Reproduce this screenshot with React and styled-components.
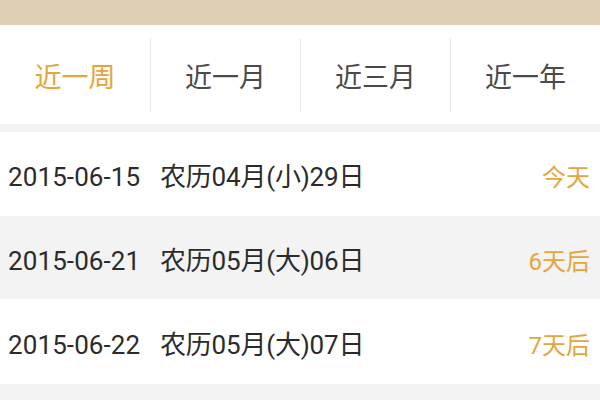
import React from "react";
import styled, { createGlobalStyle } from "styled-components";

const GlobalStyle = createGlobalStyle`
  html, body {
    margin: 0;
    padding: 0;
    background: #f3f3f3;
  }
  body {
    font-family: Roboto, "Noto Sans CJK SC", sans-serif;
  }
`;

const Page = styled.div`
  width: 600px;
  height: 400px;
  overflow: hidden;
  background: #f3f3f3;
`;

const TopBar = styled.div`
  height: 25px;
  background: #dfd0b4;
`;

const Tabs = styled.div`
  display: grid;
  grid-template-columns: repeat(4, 1fr);
  height: 99px;
  background: #fff;
  margin-bottom: 8px;
  align-items: center;
`;

const Tab = styled.div`
  height: 74px;
  display: flex;
  align-items: center;
  justify-content: center;
  font-size: 27px;
  padding-top: 2px;
  box-sizing: border-box;
  color: ${(p) => (p.active ? "#e6a53c" : "#4a4a4a")};
  border-left: ${(p) => (p.first ? "none" : "1px solid #e8e8e8")};
`;

const Row = styled.div`
  height: ${(p) => p.h}px;
  display: flex;
  align-items: baseline;
  box-sizing: border-box;
  padding: ${(p) => p.top}px 10px 0 8px;
  background: ${(p) => (p.odd ? "#f3f3f3" : "#fff")};
  color: #2b2b2b;
  font-size: 26px;
  line-height: 30px;
`;

const DateText = styled.span`
  width: 152px;
  letter-spacing: 0.1px;
`;

const Lunar = styled.span`
  flex: 1;
  letter-spacing: -0.2px;
`;

const Diff = styled.span`
  color: #e6a53c;
  font-size: 24px;
`;

const tabs = ["近一周", "近一月", "近三月", "近一年"];

const rows = [
  { date: "2015-06-15", lunar: "农历04月(小)29日", diff: "今天", h: 84, top: 30 },
  { date: "2015-06-21", lunar: "农历05月(大)06日", diff: "6天后", h: 83, top: 30 },
  { date: "2015-06-22", lunar: "农历05月(大)07日", diff: "7天后", h: 85, top: 31 },
  { date: "", lunar: "", diff: "", h: 40, top: 0 },
];

export default function App() {
  return (
    <Page>
      <GlobalStyle />
      <TopBar />
      <Tabs>
        {tabs.map((t, i) => (
          <Tab key={t} first={i === 0} active={i === 0}>
            {t}
          </Tab>
        ))}
      </Tabs>
      {rows.map((r, i) => (
        <Row key={i} h={r.h} top={r.top} odd={i % 2 === 1}>
          <DateText>{r.date}</DateText>
          <Lunar>{r.lunar}</Lunar>
          <Diff>{r.diff}</Diff>
        </Row>
      ))}
    </Page>
  );
}
